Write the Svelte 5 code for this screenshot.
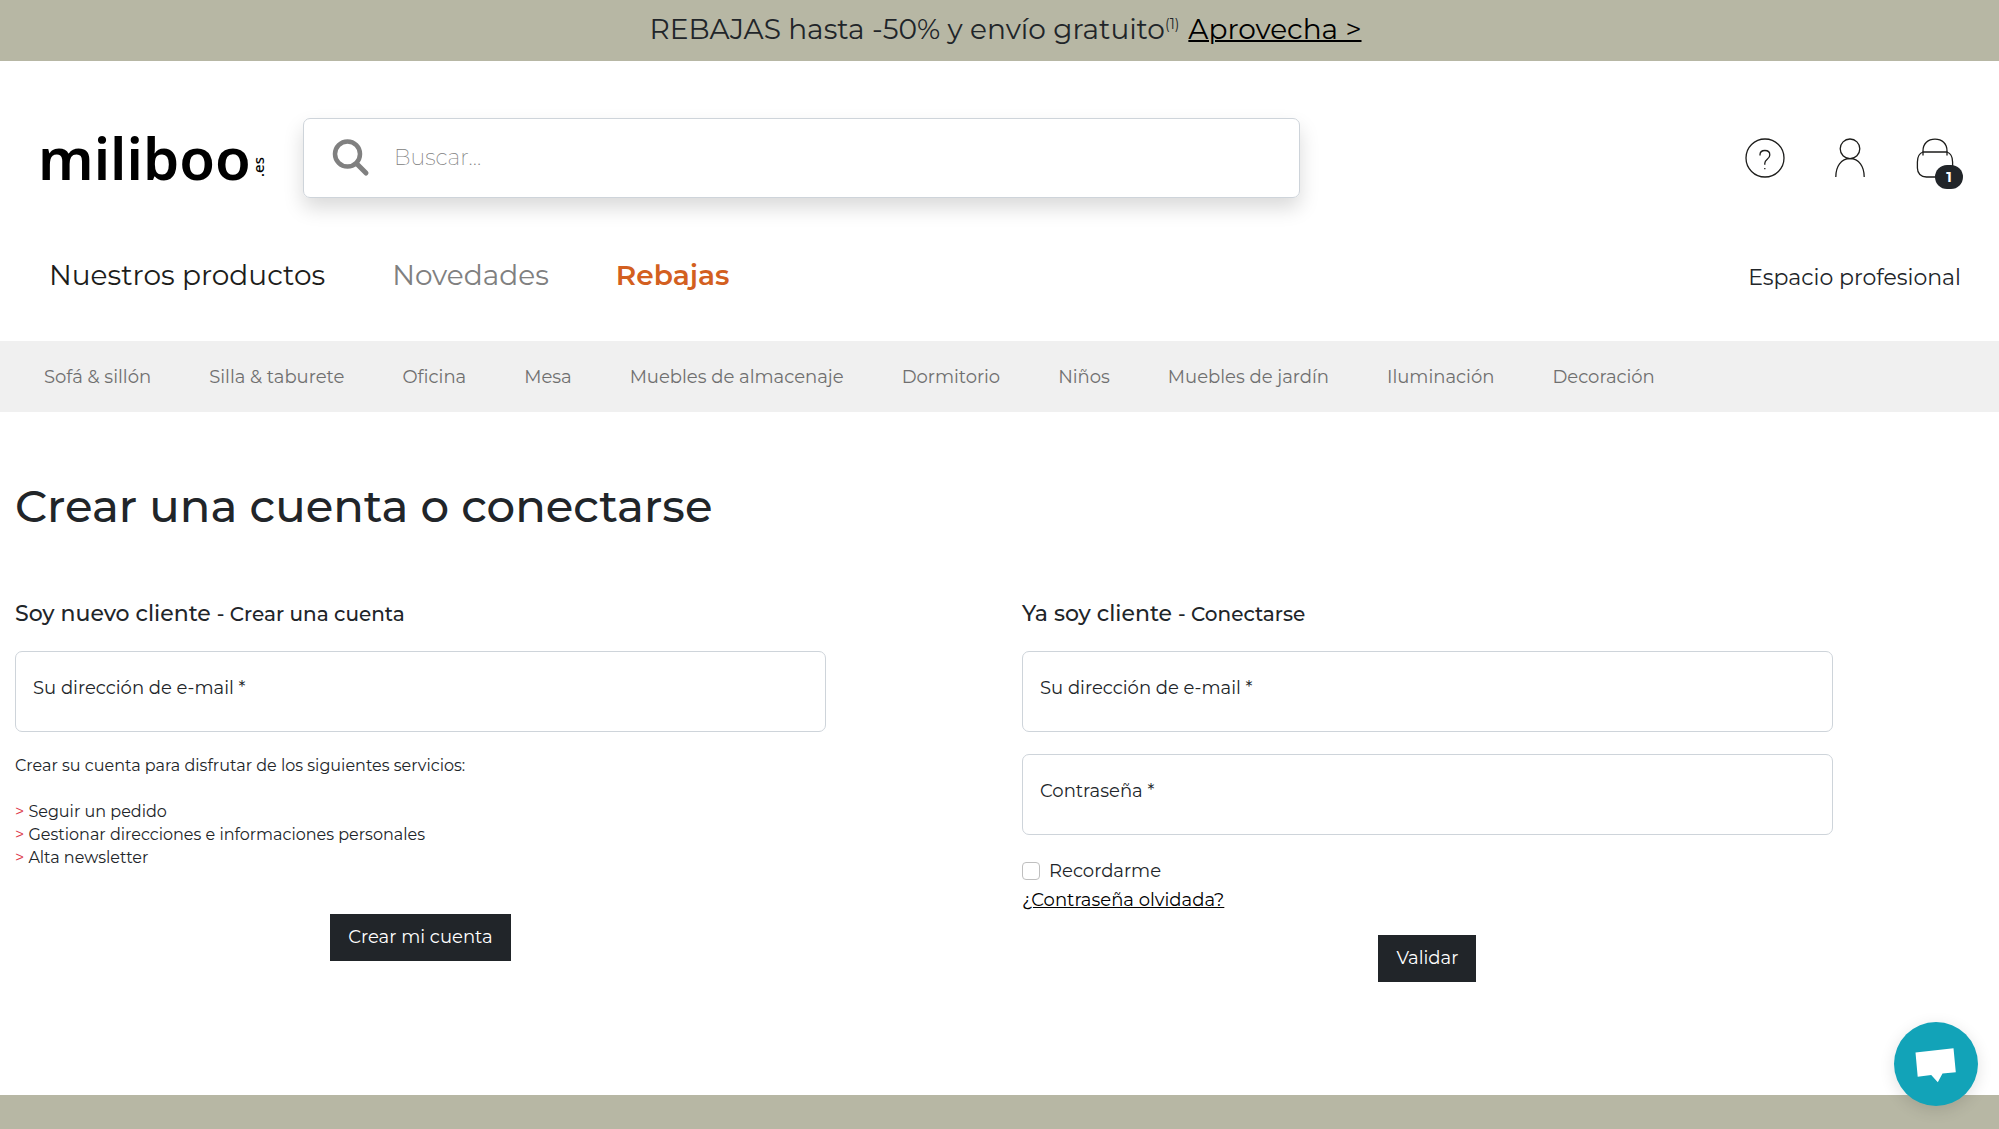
<script lang="ts">
	const categories = [
		'Sofá & sillón',
		'Silla & taburete',
		'Oficina',
		'Mesa',
		'Muebles de almacenaje',
		'Dormitorio',
		'Niños',
		'Muebles de jardín',
		'Iluminación',
		'Decoración'
	];

	const services = [
		'Seguir un pedido',
		'Gestionar direcciones e informaciones personales',
		'Alta newsletter'
	];

	let search = $state('');
	let newEmail = $state('');
	let email = $state('');
	let password = $state('');
	let remember = $state(false);
	let cartCount = $state(1);

	const handleSubmit = (event: SubmitEvent) => {
		event.preventDefault();
	};
</script>

<div class="page">
	<div class="promo">
		<span>REBAJAS hasta -50% y envío gratuito<sup>(1)</sup></span>
		<a href="#rebajas">Aprovecha &gt;</a>
	</div>

	<header>
		<div class="top">
			<a class="logo" href="#inicio" aria-label="miliboo.es">
				<span class="name">miliboo</span>
				<span class="tld">.es</span>
			</a>

			<form class="search" onsubmit={handleSubmit}>
				<button type="submit" aria-label="Buscar">
					<svg viewBox="0 0 38 38" fill="none" stroke="currentColor">
						<circle cx="15.5" cy="15" r="12.5" stroke-width="4.5" />
						<line x1="24.5" y1="24.5" x2="34" y2="34" stroke-width="5" stroke-linecap="round" />
					</svg>
				</button>
				<input type="search" aria-label="Buscar" placeholder="Buscar..." bind:value={search} />
			</form>

			<div class="tools">
				<a href="#ayuda" aria-label="Ayuda">
					<svg viewBox="0 0 40 40" fill="none" stroke="currentColor" stroke-width="1.3">
						<circle cx="20" cy="20" r="19" />
						<path d="M15 17.5v-.8c0-2.6 2.1-4.2 4.9-4.2s4.9 1.7 4.9 4.4c0 4.3-5 4.4-5 8.4v1.5" />
						<path d="M19.8 29.9v1.4" />
					</svg>
				</a>
				<a href="#cuenta" aria-label="Mi cuenta">
					<svg viewBox="0 0 40 40" fill="none" stroke="currentColor" stroke-width="1.3">
						<circle cx="20" cy="10.8" r="9.8" />
						<path d="M5.8 39c0-10.6 5.2-18.4 14.2-18.4s14.2 7.8 14.2 18.4" />
					</svg>
				</a>
				<a class="cart" href="#cesta" aria-label="Cesta">
					<svg viewBox="0 0 40 40" fill="none" stroke="currentColor" stroke-width="1.3">
						<path d="M8 17.5v-4.5C8 5.5 13 1.2 20 1.2S32 5.500 32 13v4.5" />
						<path d="M8 14h24c3.6 1.3 5.6 5 5.6 10v6c0 5.5-3.5 9-9 9H11.400c-5.5 0-9-3.5-9-9v-6c0-5 2-8.7 5.6-10z" />
					</svg>
					<span class="badge">{cartCount}</span>
				</a>
			</div>
		</div>

		<nav class="main-nav">
			<a href="#productos">Nuestros productos</a>
			<a class="muted" href="#novedades">Novedades</a>
			<a class="sale" href="#rebajas">Rebajas</a>
			<a class="pro" href="#profesional">Espacio profesional</a>
		</nav>
	</header>

	<nav class="categories">
		{#each categories as category}
			<a href="#categoria">{category}</a>
		{/each}
	</nav>

	<main>
		<h1>Crear una cuenta o conectarse</h1>

		<div class="columns">
			<form onsubmit={handleSubmit}>
				<h2>Soy nuevo cliente <small>- Crear una cuenta</small></h2>
				<div class="field">
					<label for="new-email">Su dirección de e-mail *</label>
					<input id="new-email" type="email" bind:value={newEmail} />
				</div>
				<p>Crear su cuenta para disfrutar de los siguientes servicios:</p>
				<ul>
					{#each services as service}
						<li><span class="arrow">&gt;</span> {service}</li>
					{/each}
				</ul>
				<button class="submit" type="submit">Crear mi cuenta</button>
			</form>

			<form onsubmit={handleSubmit}>
				<h2>Ya soy cliente <small>- Conectarse</small></h2>
				<div class="field">
					<label for="email">Su dirección de e-mail *</label>
					<input id="email" type="email" bind:value={email} />
				</div>
				<div class="field">
					<label for="password">Contraseña *</label>
					<input id="password" type="password" bind:value={password} />
				</div>
				<div class="remember">
					<input id="remember" type="checkbox" bind:checked={remember} />
					<label for="remember">Recordarme</label>
				</div>
				<a class="forgot" href="#olvidada">¿Contraseña olvidada?</a>
				<button class="submit" type="submit">Validar</button>
			</form>
		</div>
	</main>

	<footer></footer>

	<button class="chat" type="button" aria-label="Chat">
		<svg viewBox="0 0 84 84" fill="currentColor">
			<path d="M21.5 30.5 59.5 26.3 61.8 50.2 48.5 51.5 43.8 60.3 37.2 53 23.7 54.8z" />
		</svg>
	</button>
</div>

<style>
	:global(body) {
		margin: 0;
	}

	.page {
		min-height: 100vh;
		display: flex;
		flex-direction: column;
		background: #fff;
		color: #212529;
		font-family: Montserrat, Inter, sans-serif;
		font-size: 18px;
		line-height: 24px;
	}

	a {
		color: inherit;
		text-decoration: none;
	}

	input,
	button {
		font: inherit;
		color: inherit;
	}

	button {
		border: none;
		cursor: pointer;
	}

	.promo {
		display: flex;
		justify-content: center;
		gap: 9px;
		padding: 13px 0 16px 12px;
		background: #b7b7a4;
		font-size: 28px;
		line-height: 32px;
	}

	.promo sup {
		font-size: 14px;
		line-height: 0;
	}

	.promo a {
		color: #000;
		text-decoration: underline;
		text-decoration-thickness: 2px;
	}

	.top {
		display: flex;
		align-items: center;
		padding: 57px 36px 0 38px;
	}

	.logo {
		display: flex;
		align-items: flex-end;
		width: 265px;
		color: #000;
		font-family: 'Noto Sans', sans-serif;
		font-weight: 600;
	}

	.name {
		font-size: 58px;
		line-height: 66px;
	}

	.tld {
		padding-top: 14px;
		font-size: 15px;
		font-weight: 500;
		line-height: 14px;
		writing-mode: vertical-rl;
		transform: rotate(180deg);
	}

	.search {
		flex: 0 1 997px;
		box-sizing: border-box;
		display: flex;
		align-items: center;
		gap: 24px;
		height: 80px;
		padding: 0 28px;
		border: 1px solid #ced4da;
		border-radius: 7px;
		box-shadow: 0 10px 20px rgba(0, 0, 0, 0.15);
	}

	.search button {
		width: 38px;
		height: 38px;
		padding: 0;
		background: none;
		color: #808080;
	}

	.search input {
		flex: 1;
		padding: 0;
		border: none;
		outline: none;
		background: none;
		font-size: 22px;
		font-weight: 300;
	}

	.search input::placeholder {
		color: #808080;
		font-weight: 200;
	}

	svg {
		display: block;
		width: 100%;
		height: 100%;
	}

	.tools {
		display: flex;
		gap: 45px;
		margin-left: auto;
		padding-right: 8px;
		color: #1d1d1b;
	}

	.tools a {
		width: 40px;
		height: 40px;
	}

	.cart {
		position: relative;
	}

	.badge {
		position: absolute;
		right: -8px;
		bottom: -11px;
		width: 28px;
		border-radius: 12px;
		background: #212529;
		color: #fff;
		font-size: 14px;
		font-weight: 700;
		text-align: center;
	}

	.main-nav {
		display: flex;
		align-items: baseline;
		gap: 67px;
		padding: 61px 38px 47px 49px;
		font-size: 28px;
		line-height: 33px;
		color: #1d1d1b;
	}

	.main-nav .muted {
		color: #808080;
	}

	.main-nav .sale {
		color: #d35f20;
		font-weight: 600;
	}

	.main-nav .pro {
		margin-left: auto;
		color: #212529;
		font-size: 22px;
	}

	.categories {
		display: flex;
		gap: 58px;
		padding: 24px 44px 23px;
		background: #f0f0f0;
		color: #6f6f6f;
		white-space: nowrap;
	}

	main {
		flex: 1;
		padding-left: 15px;
	}

	h1 {
		margin: 64px 0;
		font-size: 45px;
		line-height: 60px;
		font-weight: 500;
	}

	.columns {
		display: grid;
		grid-template-columns: 1fr 1fr;
		gap: 30px;
	}

	form {
		min-width: 0;
	}

	.columns form {
		display: flex;
		flex-direction: column;
		align-items: flex-start;
		width: 83%;
	}

	h2 {
		margin: 0 0 23px;
		font-size: 22px;
		line-height: 28px;
		font-weight: 500;
	}

	h2 small {
		font-size: 20px;
	}

	.field {
		box-sizing: border-box;
		display: flex;
		flex-direction: column;
		width: 100%;
		height: 81px;
		margin-bottom: 22px;
		padding: 24px 17px 6px;
		border: 1px solid #ced4da;
		border-radius: 7px;
	}

	.field input {
		flex: 1;
		min-height: 0;
		padding: 0;
		border: none;
		outline: none;
		background: none;
	}

	p,
	ul {
		margin: 0;
		font-size: 16px;
		line-height: 23px;
	}

	ul {
		margin: 23px 0 45px;
		padding: 0;
		list-style: none;
	}

	.arrow {
		color: #dc3545;
	}

	.remember {
		display: flex;
		align-items: center;
		gap: 9px;
		margin: 2px 0 5px;
	}

	.remember input {
		appearance: none;
		width: 18px;
		height: 18px;
		margin: 0;
		border: 1px solid #bfbfbf;
		border-radius: 4px;
	}

	.remember input:checked {
		background: #212529;
	}

	.forgot {
		color: #000;
		text-decoration: underline;
		margin-bottom: 23px;
	}

	.submit {
		align-self: center;
		padding: 11px 18px 12px;
		background: #212529;
		color: #fff;
	}

	footer {
		height: 34px;
		background: #b7b7a4;
	}

	.chat {
		position: fixed;
		right: 21px;
		bottom: 23px;
		width: 84px;
		height: 84px;
		padding: 0;
		border-radius: 50%;
		background: #12a3b8;
		color: #fff;
		box-shadow: 0 4px 16px rgba(0, 0, 0, 0.12);
	}
</style>
